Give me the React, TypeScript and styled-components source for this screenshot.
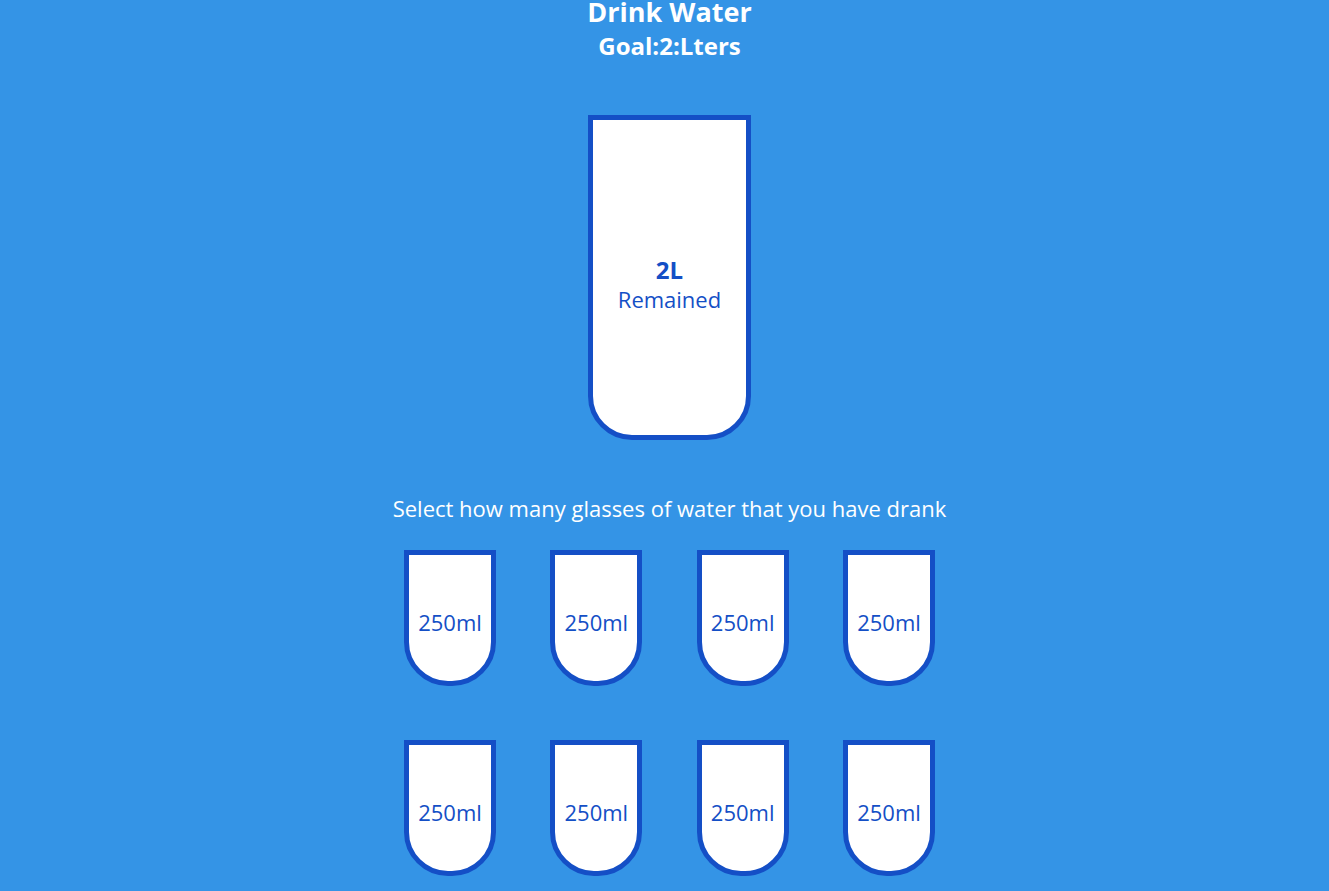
import React from 'react';
import styled, { createGlobalStyle } from 'styled-components';

const GlobalStyle = createGlobalStyle`
  *, *::before, *::after {
    box-sizing: border-box;
  }

  body {
    margin: 0;
    background: #3494e6;
    color: #fff;
    font-family: 'Segoe UI', 'Open Sans', 'Noto Sans', sans-serif;
    font-size: 22px;
    line-height: 28px;
  }
`;

const Page = styled.main`
  display: flex;
  flex-direction: column;
  align-items: center;
  min-height: 100vh;
  padding: 0 0 16px 10px;
  text-align: center;
`;

const Title = styled.h1`
  margin: 0;
  padding-bottom: 6px;
  font-size: 27px;
  font-weight: 700;
  line-height: 24px;
`;

const Goal = styled.h2`
  margin: 0 0 53px;
  font-size: 24px;
  font-weight: 700;
  line-height: 32px;
`;

const BigCup = styled.section`
  display: flex;
  flex-direction: column;
  align-items: center;
  justify-content: center;
  width: 163px;
  height: 325px;
  padding-top: 12px;
  border: 5px solid #144fc6;
  border-radius: 0 0 44px 44px;
  background: #fff;
  color: #144fc6;
`;

const Liters = styled.strong`
  font-size: 24px;
  line-height: 30px;
`;

const Caption = styled.p`
  margin: 54px 0 28px;
`;

const Cups = styled.div`
  display: grid;
  grid-template-columns: repeat(4, 92px);
  justify-content: space-between;
  row-gap: 54px;
  width: 100%;
  max-width: 531px;
`;

const SmallCup = styled.button`
  height: 136px;
  padding: 8px 0 0;
  border: 5px solid #144fc6;
  border-radius: 0 0 44px 44px;
  background: #fff;
  color: #144fc6;
  font: inherit;
  cursor: pointer;
`;

const glasses = Array.from({ length: 8 }, (_, index) => index + 1);

export default function App() {
  return (
    <>
      <GlobalStyle />
      <Page>
        <Title>Drink Water</Title>
        <Goal>Goal:2:Lters</Goal>
        <BigCup>
          <Liters>2L</Liters>
          <span>Remained</span>
        </BigCup>
        <Caption>Select how many glasses of water that you have drank</Caption>
        <Cups>
          {glasses.map((glass) => (
            <SmallCup key={glass} type="button">
              250ml
            </SmallCup>
          ))}
        </Cups>
      </Page>
    </>
  );
}
